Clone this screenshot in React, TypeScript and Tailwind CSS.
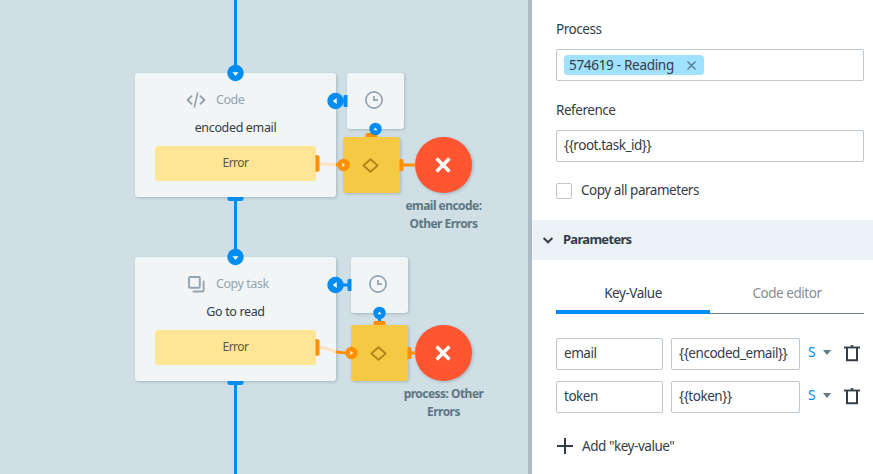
import React from "react";

type NodeProps = { top: number; title: string; name: string; icon: React.ReactNode };

const CodeIcon = () => (
  <svg width="20" height="16" viewBox="0 0 20 16" fill="none" stroke="#94a4b0" strokeWidth="2">
    <path d="M6 3.6 1.6 8 6 12.4M14 3.6 18.4 8 14 12.4" strokeLinejoin="round" />
    <path d="M11.7.4 8.3 15.6" strokeWidth="1.7" />
  </svg>
);

const CopyIcon = () => (
  <svg width="17" height="17" viewBox="0 0 17 17" fill="none" stroke="#94a4b0" strokeWidth="1.9">
    <rect x="1" y="1" width="10.8" height="10.8" rx="1" />
    <path d="M15.6 4.8V14.5a1 1 0 0 1-1 1H4.8" />
  </svg>
);

const ProcessNode = ({ top, title, name, icon }: NodeProps) => (
  <div
    className="absolute left-[135px] flex h-[124px] w-[201px] flex-col items-center rounded-[3px] bg-[#f1f5f6] shadow-[1px_1px_3px_rgba(70,95,110,0.3)]"
    style={{ top }}
  >
    <div className="mt-[17px] flex h-[20px] w-full items-center pl-[51px]">
      <span className="flex w-[30px] shrink-0 items-center">{icon}</span>
      <span className="text-[12.5px] leading-[20px] tracking-[-0.45px] text-[#94a4b0]">{title}</span>
    </div>
    <div className="mt-[8px] h-[20px] text-[12.5px] leading-[20px] tracking-[-0.35px] text-[#343c46]">{name}</div>
    <div className="mt-[8px] flex h-[35px] w-[161px] items-center justify-center rounded-[3px] bg-[#ffe697] pb-px text-[12px] tracking-[-0.5px] text-[#5c5743]">
      Error
    </div>
  </div>
);

const TimerNode = ({ left, top }: { left: number; top: number }) => (
  <div
    className="absolute flex h-[56px] w-[57px] items-center justify-center rounded-[3px] bg-[#f1f5f6] pb-[2px] shadow-[1px_1px_3px_rgba(70,95,110,0.3)]"
    style={{ left, top }}
  >
    <svg width="18" height="18" viewBox="0 0 18 18" fill="none" stroke="#94a4b0" className="-ml-[3px]">
      <circle cx="9" cy="9" r="8.1" strokeWidth="1.7" />
      <path d="M9 5v4.2h4" strokeWidth="1.8" />
    </svg>
  </div>
);

const ConditionNode = ({ left, top }: { left: number; top: number }) => (
  <div
    className="absolute flex h-[56px] w-[57px] items-center justify-center rounded-[3px] bg-[#f6c944] shadow-[1px_1px_3px_rgba(70,95,110,0.3)]"
    style={{ left, top }}
  >
    <svg width="17" height="15" viewBox="0 0 17 15" fill="none" stroke="#ae8519" strokeWidth="1.8" strokeLinejoin="round" className="-ml-[2px]">
      <path d="M8.5 1.3 15.6 7.5 8.5 13.7 1.4 7.5Z" />
    </svg>
  </div>
);

const ErrorNode = ({ top, lines }: { top: number; lines: string[] }) => (
  <div className="absolute left-[393px] flex w-[101px] flex-col items-center" style={{ top }}>
    <div className="mb-[4px] flex h-[56px] w-[57px] items-center justify-center rounded-full bg-[#ff5530] shadow-[1px_1px_3px_rgba(70,95,110,0.35)]">
      <svg width="16" height="16" viewBox="0 0 16 16" stroke="#fff" strokeWidth="3.5" className="-ml-px">
        <path d="M1.6 1.6 14.4 14.4M14.4 1.6 1.6 14.4" />
      </svg>
    </div>
    {lines.map((line) => (
      <div key={line} className="text-[12px] leading-[18px] font-bold tracking-[-0.53px] whitespace-nowrap text-[#5d7682]">
        {line}
      </div>
    ))}
  </div>
);

const Trash = () => (
  <svg width="16" height="17" viewBox="0 0 16 17" fill="none" stroke="#343c46" strokeWidth="2" className="shrink-0">
    <path d="M0 2.5h16" strokeWidth="1.8" />
    <path d="M6.5 1h3" strokeWidth="1.6" />
    <path d="M3 3v12.2h10V3" />
  </svg>
);

const ParamRow = ({ name, value }: { name: string; value: string }) => (
  <div className="flex h-[32px]">
    <div className="h-[32px] w-[107px] rounded-[2px] border border-[#bdc7cd] pl-[7px] leading-[29px]">{name}</div>
    <div className="ml-[8px] h-[32px] w-[129px] rounded-[2px] border border-[#bdc7cd] pl-[7px] leading-[29px]">{value}</div>
    <div className="ml-[8px] w-[15px] text-[14px] leading-[28px] text-[#008cf0]">S</div>
    <svg width="8" height="5" viewBox="0 0 8 5" className="mt-[12px] shrink-0">
      <path d="M0 0h8L4 5Z" fill="#60798a" />
    </svg>
    <div className="mt-[7px] ml-[13px]">
      <Trash />
    </div>
  </div>
);

export default function App() {
  return (
    <div className="flex h-[474px] w-[873px] overflow-hidden bg-[#d0dee5] font-['Noto_Sans','Open_Sans',sans-serif]">
      <main className="relative h-full w-[528px] shrink-0">
        <ProcessNode top={73} title="Code" name="encoded email" icon={<CodeIcon />} />
        <ProcessNode top={257} title="Copy task" name="Go to read" icon={<span className="ml-[2px] flex"><CopyIcon /></span>} />
        <TimerNode left={347} top={73} />
        <TimerNode left={351} top={257} />
        <ConditionNode left={343} top={137} />
        <ConditionNode left={351} top={325} />
        <ErrorNode top={137} lines={["email encode:", "Other Errors"]} />
        <ErrorNode top={325} lines={["process: Other", "Errors"]} />
        <svg width="528" height="474" viewBox="0 0 528 474" className="absolute inset-0" fill="none">
          <g stroke="#008cf0" strokeWidth="3">
            <path d="M235.5 0V73M235.5 199V257M235.5 383V474" />
            <path d="M336 285h13M379.5 313v9M336 101h10" />
          </g>
          <g fill="#008cf0">
            <path d="M227.5 197h16v1.5a2.5 2.5 0 0 1-2.5 2.5h-11a2.5 2.5 0 0 1-2.5-2.5Z" />
            <path d="M227.5 381h16v1.5a2.5 2.5 0 0 1-2.5 2.5h-11a2.5 2.5 0 0 1-2.5-2.5Z" />
            <path d="M347.5 95v12h-2.5a1.5 1.5 0 0 1-1.5-1.5v-9a1.5 1.5 0 0 1 1.5-1.5Z" />
            <path d="M351.5 279v12h-2.5a1.5 1.5 0 0 1-1.5-1.5v-9a1.5 1.5 0 0 1 1.5-1.5Z" />
          </g>
          <g stroke="#fee3c1" strokeWidth="3">
            <path d="M319.5 163.7 336 164.6" />
            <path d="M319.5 347.5C326 347.5 330 350 336 351.6" />
          </g>
          <g stroke="#ff8f05" strokeWidth="3">
            <path d="M336 164.6 343 165M403 165h12.5" />
            <path d="M336 351.6C340 352.8 345 353 351 353M411 353h4.5" />
          </g>
          <g fill="#ff8f05">
            <path d="M315.5 155.3h2.5a1.5 1.5 0 0 1 1.5 1.5v13.4a1.5 1.5 0 0 1-1.5 1.5h-2.5Z" />
            <path d="M315.5 339.3h2.5a1.5 1.5 0 0 1 1.5 1.5v13.4a1.5 1.5 0 0 1-1.5 1.5h-2.5Z" />
            <path d="M399.5 159h2.5a1.5 1.5 0 0 1 1.5 1.5v9a1.5 1.5 0 0 1-1.5 1.5h-2.5Z" />
            <path d="M407.5 347h2.5a1.5 1.5 0 0 1 1.5 1.5v9a1.5 1.5 0 0 1-1.5 1.5h-2.5Z" />
            <path d="M365.5 137v-2.5a1.5 1.5 0 0 1 1.5-1.5h9a1.5 1.5 0 0 1 1.5 1.5v2.5Z" />
            <path d="M373.5 325v-2.5a1.5 1.5 0 0 1 1.5-1.5h9a1.5 1.5 0 0 1 1.5 1.5v2.5Z" />
            <circle cx="343.5" cy="165" r="6.2" />
            <circle cx="351.5" cy="353" r="6.2" />
          </g>
          <g fill="#008cf0">
            <circle cx="235.5" cy="73" r="8.2" />
            <circle cx="235.5" cy="257" r="8.2" />
            <circle cx="335.5" cy="101" r="8.2" />
            <circle cx="335.5" cy="285" r="8.2" />
            <circle cx="375.5" cy="129" r="6.2" />
            <circle cx="379.5" cy="313" r="6.2" />
          </g>
          <g fill="#fff">
            <path d="M232.5 72.2h6l-3 3.8ZM232.5 256.2h6l-3 3.8Z" />
            <path d="M336.7 98v6l-3.9-3ZM336.7 282v6l-3.9-3Z" />
            <path d="M373.5 130.3h4l-2-2.8ZM377.5 314.3h4l-2-2.8Z" />
            <path d="M342.3 163v4l2.8-2ZM350.3 351v4l2.8-2Z" />
          </g>
        </svg>
      </main>
      <aside className="flex h-full w-[345px] shrink-0 flex-col border-l-4 border-[#abbac4] bg-white text-[13.5px] tracking-[-0.46px] text-[#343c46]">
        <div className="flex h-[220px] shrink-0 flex-col pr-[9px] pl-[24px]">
          <label className="mt-[19px] h-[20px] leading-[20px]">Process</label>
          <div className="mt-[10px] flex h-[32px] shrink-0 items-center rounded-[2px] border border-[#bdc7cd] pl-[7px]">
            <div className="flex h-[20px] w-[140px] items-center justify-between rounded-[4px] bg-[#a0e1ff] pr-[8px] pl-[5px]">
              <span className="tracking-[-0.3px]">574619 - Reading</span>
              <svg width="9" height="9" viewBox="0 0 9 9" stroke="#58798a" strokeWidth="1.3">
                <path d="M.5.5l8 8M8.5.5l-8 8" />
              </svg>
            </div>
          </div>
          <label className="mt-[19px] h-[20px] leading-[20px]">Reference</label>
          <div className="mt-[10px] h-[32px] shrink-0 rounded-[2px] border border-[#bdc7cd] pl-[7px] leading-[29px]">{"{{root.task_id}}"}</div>
          <div className="mt-[18px] flex h-[22px] items-center gap-[9px]">
            <span className="size-[16px] rounded-[2px] border border-[#bdc7cd]" />
            <span className="pb-px">Copy all parameters</span>
          </div>
        </div>
        <div className="flex h-[40px] shrink-0 items-center bg-[#eaf2f6] pl-[11px] font-bold">
          <svg width="10" height="7" viewBox="0 0 10 7" fill="none" stroke="#343c46" strokeWidth="2">
            <path d="M.6 1 5 5.3 9.4 1" />
          </svg>
          <span className="ml-[10px] pb-px text-[13px] tracking-[-0.7px]">Parameters</span>
        </div>
        <div className="flex flex-col pr-[9px] pl-[24px]">
          <div className="mt-[20px] flex h-[34px]">
            <div className="h-[34px] w-[154px] border-b-4 border-[#008cf0] text-center leading-[26px]">Key-Value</div>
            <div className="h-[34px] w-[154px] border-b border-[#6d818c] text-center leading-[26px] text-[#858d94]">Code editor</div>
          </div>
          <div className="mt-[24px] flex flex-col gap-[11px]">
            <ParamRow name="email" value="{{encoded_email}}" />
            <ParamRow name="token" value="{{token}}" />
          </div>
          <div className="mt-[22px] flex h-[22px] items-center">
            <svg width="16" height="16" viewBox="0 0 16 16" stroke="#343c46" strokeWidth="2" className="ml-px">
              <path d="M8 0v16M0 8h16" />
            </svg>
            <span className="ml-[9px]">Add "key-value"</span>
          </div>
        </div>
      </aside>
    </div>
  );
}
